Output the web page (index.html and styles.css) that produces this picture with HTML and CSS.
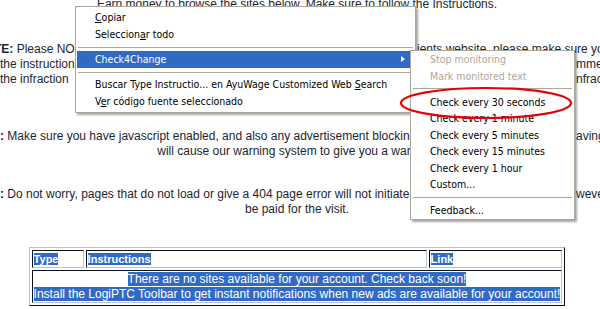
FILE: index.html
```html
<!DOCTYPE html>
<html>
  <head>
    <title>Browse Sites</title>
    <link rel="stylesheet" href="styles.css">
  </head>
  <body>
    <div class="page">
      <p class="intro">Earn money to browse the sites below. Make sure to follow the Instructions.</p>

      <div class="note note-first">
        <div class="row">
          <span class="left cut"><b>NOTE:</b> Please NOT close this window while</span>
          <span class="right">ients website, please make sure you</span>
        </div>
        <div class="row far">
          <span class="left">the instructions carefully, or you</span>
          <span class="right">mmediately</span>
        </div>
        <div class="row far">
          <span class="left">the infraction</span>
          <span class="right">nfraction</span>
        </div>
      </div>

      <div class="note note-second">
        <div class="row far">
          <span class="left"><b>:</b> Make sure you have javascript enabled, and also any advertisement blocking off</span>
          <span class="right">aving</span>
        </div>
        <div class="center">will cause our warning system to give you a warning.</div>
      </div>

      <div class="note note-third">
        <div class="row far">
          <span class="left"><b>:</b> Do not worry, pages that do not load or give a 404 page error will not initiate the timer</span>
          <span class="right">wever</span>
        </div>
        <div class="center">be paid for the visit.</div>
      </div>

      <table class="sites">
        <tr>
          <th class="col-type"><span class="sel">Type</span></th>
          <th class="col-instr"><span class="sel">Instructions</span></th>
          <th><span class="sel">Link</span></th>
        </tr>
        <tr>
          <td colspan="3" class="empty">
            <span class="sel">There are no sites available for your account. Check back soon!</span><br>
            <span class="sel">Install the LogiPTC Toolbar to get instant notifications when new ads are available for your account!</span>
          </td>
        </tr>
      </table>
    </div>

    <div class="menu menu-main">
      <div class="item"><u>C</u>opiar</div>
      <div class="item">Seleccion<u>a</u>r todo</div>
      <div class="sep"></div>
      <div class="item active has-sub">Check4Change</div>
      <div class="sep"></div>
      <div class="item">Buscar Type Instructio... en AyuWage Customized Web <u>S</u>earch</div>
      <div class="item">V<u>e</u>r código fuente seleccionado</div>
    </div>

    <div class="menu menu-sub">
      <div class="item disabled">Stop monitoring</div>
      <div class="item disabled">Mark monitored text</div>
      <div class="sep"></div>
      <div class="item">Check every 30 seconds</div>
      <div class="item">Check every 1 minute</div>
      <div class="item">Check every 5 minutes</div>
      <div class="item">Check every 15 minutes</div>
      <div class="item">Check every 1 hour</div>
      <div class="item">Custom...</div>
      <div class="sep"></div>
      <div class="item">Feedback...</div>
    </div>

    <svg class="mark" width="178" height="36" viewBox="0 0 178 36">
      <ellipse cx="88" cy="17" rx="85" ry="15" fill="none" stroke="#e5000a" stroke-width="2.2" />
    </svg>
  </body>
</html>
```

FILE: styles.css
```css
html,
body {
  margin: 0;
  overflow: hidden;
}
body {
  width: 600px;
  height: 309px;
  background: #fff;
  font-family: "Liberation Sans", Arial, sans-serif;
  font-size: 12px;
  color: #1c2530;
}
.page {
  width: 594px;
}
.intro {
  margin: -3px 0 0;
  line-height: 15px;
  text-align: center;
  white-space: nowrap;
}
.note {
  line-height: 15px;
  white-space: nowrap;
}
.note-first {
  margin-top: 30px;
}
.note-second {
  margin-top: 42px;
}
.note-third {
  margin-top: 28px;
}
.row {
  display: grid;
  grid-template-columns: 417px auto;
}
.row.far {
  grid-template-columns: 576px auto;
}
.left.cut {
  margin-left: -24px;
}
.center {
  text-align: center;
}

.sites {
  width: 535px;
  margin: 30px auto 0;
  border: 1px solid;
  border-color: #b6c2ce #08131f #08131f #b6c2ce;
  border-spacing: 2px;
}
.sites th,
.sites td {
  border: 1px solid;
  border-color: #08131f #b6c2ce #b6c2ce #08131f;
  padding: 1px;
}
.sites th {
  text-align: left;
  font-size: 11px;
  line-height: 14px;
  color: #fff;
}
.col-type {
  width: 48px;
}
.col-instr {
  width: 337px;
}
.sites td.empty {
  text-align: center;
  line-height: 14.5px;
  white-space: nowrap;
}
.sel {
  background: #316ac5;
  color: #fff;
}

.menu {
  position: absolute;
  background: #fff;
  border: 1px solid #aca899;
  box-shadow: 2px 2px 2px rgba(0, 0, 0, 0.35);
  padding: 2px 1px;
  font-family: "DejaVu Sans Condensed", "Liberation Sans", sans-serif;
  font-size: 10.5px;
  color: #000;
}
.menu-main {
  left: 75px;
  top: 6px;
  width: 337px;
  z-index: 1;
}
.menu-sub {
  left: 410px;
  top: 50px;
  width: 161px;
  padding: 0 1px;
  z-index: 2;
}
.item {
  position: relative;
  height: 17px;
  line-height: 17px;
  padding-left: 18px;
  white-space: nowrap;
}
.menu-sub .item {
  height: 16.5px;
  line-height: 16.5px;
}
.item.active {
  background: #316ac5;
  color: #fff;
}
.item.disabled {
  color: #aca899;
}
.has-sub::after {
  content: "";
  position: absolute;
  right: 9px;
  top: 5px;
  border-left: 4px solid #fff;
  border-top: 3.5px solid transparent;
  border-bottom: 3.5px solid transparent;
}
.sep {
  height: 1px;
  margin: 4px 1px 3px;
  background: #aca899;
}
.menu-sub .sep {
  margin: 4px 1px 4.5px;
}
.mark {
  position: absolute;
  left: 398px;
  top: 86px;
  z-index: 3;
}
```
